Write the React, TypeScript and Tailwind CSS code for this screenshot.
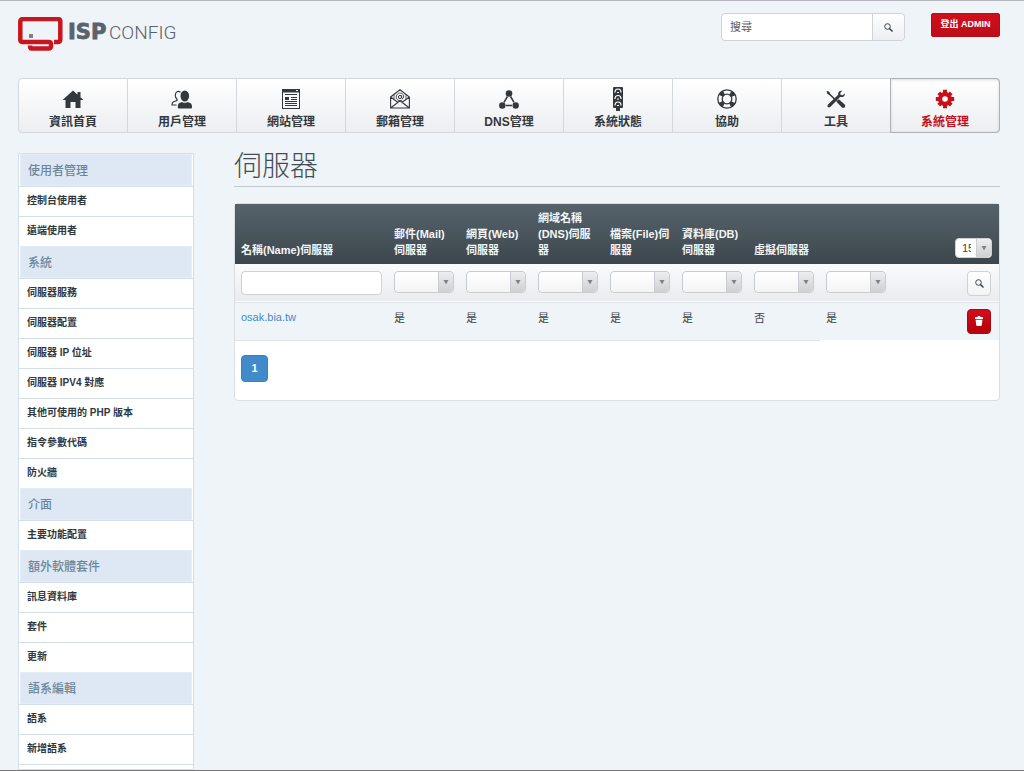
import type { ReactNode } from "react";

const navItems: { label: string; icon: ReactNode; active?: boolean }[] = [
  { label: "資訊首頁", icon: <HomeIcon /> },
  { label: "用戶管理", icon: <UsersIcon /> },
  { label: "網站管理", icon: <SitesIcon /> },
  { label: "郵箱管理", icon: <MailIcon /> },
  { label: "DNS管理", icon: <DnsIcon /> },
  { label: "系統狀態", icon: <MonitorIcon /> },
  { label: "協助", icon: <HelpIcon /> },
  { label: "工具", icon: <ToolsIcon /> },
  { label: "系統管理", icon: <GearIcon />, active: true },
];

const sections = [
  { title: "使用者管理", items: ["控制台使用者", "遠端使用者"] },
  {
    title: "系統",
    items: [
      "伺服器服務",
      "伺服器配置",
      "伺服器 IP 位址",
      "伺服器 IPV4 對應",
      "其他可使用的 PHP 版本",
      "指令參數代碼",
      "防火牆",
    ],
  },
  { title: "介面", items: ["主要功能配置"] },
  { title: "額外軟體套件", items: ["訊息資料庫", "套件", "更新"] },
  { title: "語系編輯", items: ["語系", "新增語系"] },
];

const columns = [
  { id: "mail", label: "郵件(Mail)伺服器" },
  { id: "web", label: "網頁(Web)伺服器" },
  { id: "dns", label: "網域名稱(DNS)伺服器" },
  { id: "file", label: "檔案(File)伺服器" },
  { id: "db", label: "資料庫(DB)伺服器" },
  { id: "vserver", label: "虛擬伺服器" },
  { id: "active", label: "" },
];

const servers = [
  { name: "osak.bia.tw", values: ["是", "是", "是", "是", "是", "否", "是"] },
];

export default function App() {
  return (
    <div className="flex h-screen flex-col overflow-hidden border-t border-b border-t-[#b4b8bc] border-b-[#77797b] bg-[#eff4f8] pr-6 pl-[18px] font-['Liberation_Sans','Noto_Sans_CJK_TC',sans-serif] text-[11px] text-[#3c464d]">
      <Header />
      <MainNav />
      <div className="mt-5 flex min-h-0 flex-1 gap-10">
        <Sidebar />
        <main className="min-w-0 flex-1">
          <h1 className="-mt-1 border-b border-[#c3c8cc] pb-px text-[28px] leading-9 font-light text-[#454d54]">
            伺服器
          </h1>
          <ServerList />
        </main>
      </div>
    </div>
  );
}

function Header() {
  return (
    <header className="flex shrink-0 items-start pt-3">
      <a href="#" aria-label="ISPConfig" className="mt-1">
        <Logo />
      </a>
      <form className="ml-auto flex h-7 w-[184px] rounded-sm border border-[#cdd3d8] bg-white">
        <input
          type="search"
          aria-label="搜尋"
          placeholder="搜尋"
          className="min-w-0 flex-1 px-2 outline-none placeholder:text-[#555c62]"
        />
        <button
          type="button"
          aria-label="搜尋"
          className="flex w-8 items-center justify-center rounded-r-sm border-l border-[#cdd3d8] bg-linear-to-b from-white to-[#eceef1]"
        >
          <SearchIcon />
        </button>
      </form>
      <button
        type="button"
        className="ml-[26px] h-6 w-[69px] rounded-xs border border-[#b50d17] bg-linear-to-b from-[#d00f1b] to-[#bd0d18] text-[9px] font-bold whitespace-nowrap text-white"
      >
        登出 ADMIN
      </button>
    </header>
  );
}

function MainNav() {
  return (
    <nav className="mt-[27px] flex h-[55px] shrink-0 rounded-sm border border-[#d3d8dc] bg-linear-to-b from-white to-[#eceef1]">
      {navItems.map((item) => (
        <a
          key={item.label}
          href="#"
          className={
            item.active
              ? "-m-px flex flex-1 flex-col items-center rounded-r-sm border border-[#adb2b7] pt-[10px] text-[12px] leading-4 font-bold text-[#c8101c] shadow-[inset_0_1px_3px_rgba(0,0,0,0.14)]"
              : "flex flex-1 flex-col items-center border-r border-[#d3d8dc] pt-[10px] text-[12px] leading-4 font-bold text-[#33383c]"
          }
        >
          <span className="mb-[5px] flex h-5 items-center">{item.icon}</span>
          {item.label}
        </a>
      ))}
    </nav>
  );
}

function Sidebar() {
  return (
    <aside className="w-[176px] shrink-0 border border-[#d3e0ea] bg-white">
      {sections.map((section) => (
        <section key={section.title}>
          <h2 className="mx-px h-8 border border-[#e4ecf6] bg-[#dee8f5] pl-[7px] text-[12px] leading-8 font-medium text-[#6c8799]">
            {section.title}
          </h2>
          <ul>
            {section.items.map((item) => (
              <li key={item} className="border-t border-[#d3e0ea]">
                <a href="#" className="block h-[29px] pl-2 text-[10px] leading-7 font-bold text-[#2f383f]">
                  {item}
                </a>
              </li>
            ))}
          </ul>
        </section>
      ))}
      <div className="border-t border-[#d3e0ea]" />
    </aside>
  );
}

function ServerList() {
  return (
    <div className="mt-4 rounded-sm border border-[#d9dee2] bg-white pb-[18px]">
      <table className="w-full table-fixed">
        <colgroup>
          <col className="w-[153px]" />
          {columns.map((column) => (
            <col key={column.id} className="w-[72px]" />
          ))}
          <col />
        </colgroup>
        <thead>
          <tr className="h-[60px] bg-linear-to-b from-[#56636b] to-[#3d464d] text-left align-bottom leading-4 text-[#f3f5f6]">
            <th className="px-[6px] pb-[6px] font-bold">名稱(Name)伺服器</th>
            {columns.map((column) => (
              <th key={column.id} className="px-[6px] pb-[6px] font-bold">
                {column.label}
              </th>
            ))}
            <th className="pr-[7px] pb-[6px]">
              <span className="relative ml-auto block h-5 w-[37px]">
                <select
                  aria-label="Rows per page"
                  className="block h-full w-full appearance-none overflow-hidden rounded-sm border border-[#cfd3d6] bg-white pr-5 pl-[6px] text-[11px] font-normal text-[#444]"
                >
                  <option>15</option>
                </select>
                <SelectArrow />
              </span>
            </th>
          </tr>
        </thead>
        <tbody>
          <tr className="h-[38px] border-b border-[#dfe3e8] bg-linear-to-b from-[#fbfbfc] to-[#e9ebef] align-top">
            <td className="px-[6px] pt-[7px]">
              <input
                type="text"
                aria-label="名稱(Name)伺服器"
                className="block h-6 w-full rounded-sm border border-[#cdd2d6] bg-white px-2"
              />
            </td>
            {columns.map((column) => (
              <td key={column.id} className="px-[6px] pt-[7px]">
                <span className="relative block h-[22px]">
                  <select
                    aria-label={column.label || "Active"}
                    className="block h-full w-full appearance-none rounded-sm border border-[#c9cdd1] bg-linear-to-b from-white to-[#f4f4f5] px-1"
                  >
                    <option></option>
                  </select>
                  <SelectArrow />
                </span>
              </td>
            ))}
            <td className="pt-[7px] pr-2">
              <button
                type="button"
                aria-label="Filter"
                className="ml-auto flex h-[25px] w-6 items-center justify-center rounded-sm border border-[#cdd2d6] bg-linear-to-b from-white to-[#f2f3f5]"
              >
                <SearchIcon />
              </button>
            </td>
          </tr>
          {servers.map((server) => (
            <tr key={server.name} className="h-[38px] bg-[#eff4f8] align-top leading-4">
              <td className="border-b border-[#e0e2e4] px-[6px] pt-[6px]">
                <a href="#" className="text-[#428bca]">
                  {server.name}
                </a>
              </td>
              {server.values.map((value, index) => (
                <td
                  key={columns[index].id}
                  className="border-b border-[#e0e2e4] px-[6px] pt-[7px] nth-[8]:border-b-0"
                >
                  {value}
                </td>
              ))}
              <td className="pt-[6px] pr-2">
                <button
                  type="button"
                  aria-label="Delete"
                  className="ml-auto flex h-[25px] w-6 items-center justify-center rounded-sm border border-[#a90a13] bg-linear-to-b from-[#d10f1b] to-[#b60009] text-white"
                >
                  <TrashIcon />
                </button>
              </td>
            </tr>
          ))}
        </tbody>
      </table>
      <div className="px-[6px] pt-[14px]">
        <button
          type="button"
          aria-current="page"
          className="h-[27px] w-[27px] rounded-sm border border-[#3a80bd] bg-[#428bca] font-bold text-white"
        >
          1
        </button>
      </div>
    </div>
  );
}

function SelectArrow() {
  return (
    <span className="pointer-events-none absolute inset-y-px right-px flex w-[15px] items-center justify-center rounded-r-sm border-l border-[#c9cdd1] bg-linear-to-b from-[#eeeeef] to-[#cfd0d2]">
      <svg width="6" height="6" viewBox="0 0 6 6" className="fill-[#808285]" aria-hidden="true">
        <path d="M.5 1h5L3 5.500z" />
      </svg>
    </span>
  );
}

function Logo() {
  return (
    <svg width="160" height="34" viewBox="0 0 160 34" aria-hidden="true">
      <path
        d="M36 25H39.500Q42.300 25 42.300 22.500V4.500Q42.300 2 39.500 2H5Q2.300 2 2.300 4.500V22.500Q2.300 25 5 25H30.500Q33 25 33 27V29Q33 31.500 30.500 31.500H13.500Q12 31.500 12 28.500"
        fill="none"
        stroke="#c8161f"
        strokeWidth="4.500"
      />
      <rect x="11" y="17" width="4" height="4" fill="#7b8388" />
      <text x="50" y="22" fontSize="21" fontWeight="700" fontFamily="DejaVu Sans" fill="#5a636b" stroke="#5a636b" strokeWidth="0.8">
        ISP
      </text>
      <text x="91" y="22" fontSize="19" fontWeight="300" fontFamily="Roboto" fill="#5a636b">
        CONFIG
      </text>
    </svg>
  );
}

function SearchIcon() {
  return (
    <svg width="9" height="9" viewBox="0 0 9 9" fill="none" stroke="#3c4247" aria-hidden="true">
      <circle cx="3.500" cy="3.500" r="2.800" />
      <path d="M5.700 5.700L8 8" strokeWidth="1.600" strokeLinecap="round" />
    </svg>
  );
}

function TrashIcon() {
  return (
    <svg width="8" height="10" viewBox="0 0 8 10" fill="currentColor" aria-hidden="true">
      <path d="M0 1.500Q0 1 .6 1H2.500L3 0H5L5.500 1H7.400Q8 1 8 1.500V3H0zM.6 3.700H7.400L6.800 9Q6.700 10 5.800 10H2.200Q1.300 10 1.200 9z" />
    </svg>
  );
}

function HomeIcon() {
  return (
    <svg width="22" height="19" viewBox="0 0 22 19" fill="currentColor" aria-hidden="true">
      <path d="M11 .5L21.500 10H18.500V18H13.500V12H8.500V18H3.500V10H.5zM15.500 2H18.500V7.500L15.500 4.800z" />
    </svg>
  );
}

function UsersIcon() {
  return (
    <svg width="22" height="19" viewBox="0 0 22 19" aria-hidden="true">
      <g fill="none" stroke="currentColor" strokeWidth="1.200">
        <path d="M9.500 2.200C7.500 .6 4.300 1.800 4.300 5.200C4.300 7 5 8.400 6 9.300V10.500L2.500 11.800Q1 12.500 1 15H5.500" />
      </g>
      <ellipse cx="13.800" cy="6" rx="4.300" ry="5.600" fill="currentColor" />
      <path d="M6.800 17.500Q6.600 13.600 8.500 12.900L11 11.900Q13.800 13.800 16.600 11.900L19.200 12.900Q21.100 13.600 21 17.500Q21 18.500 20 18.500H7.800Q6.800 18.500 6.800 17.500z" fill="currentColor" />
    </svg>
  );
}

function SitesIcon() {
  return (
    <svg width="18" height="20" viewBox="0 0 18 20" fill="none" stroke="currentColor" aria-hidden="true">
      <rect x="0.500" y="0.500" width="17" height="19" />
      <path d="M0 2H18" strokeWidth="3" />
      <path d="M14 1.500h2" stroke="white" />
      <path d="M3 5.500H15M9 8.500H15M9 10.500H15M3 12.500H15M3 14.500H15M3 16.500H15" />
      <path d="M3 9.500H7" strokeWidth="3" />
    </svg>
  );
}

function MailIcon() {
  return (
    <svg width="20" height="20" viewBox="0 0 20 20" fill="none" stroke="currentColor" aria-hidden="true">
      <path d="M.6 8L10 .8L19.400 8V19H.6zM.6 8L7.800 13.300M19.400 8L12.200 13.300M.6 19L10 11.800L19.400 19" strokeWidth="1.100" />
      <path d="M4 10.200V5.500M16 10.200V5.500" strokeWidth="0.800" />
      <circle cx="10" cy="8" r="1.600" />
      <path d="M11.700 6.200V8.600Q11.900 10 13 9.300Q14 8.400 13.600 6.600C12.700 3.500 8.500 3.300 6.900 5.700C5.300 8.500 7 11.600 10 11.600Q11.400 11.600 12.400 11" strokeWidth="0.900" />
    </svg>
  );
}

function DnsIcon() {
  return (
    <svg width="20" height="19" viewBox="0 0 20 19" fill="currentColor" aria-hidden="true">
      <circle cx="10" cy="3.500" r="3.300" />
      <circle cx="3.300" cy="15.500" r="3.200" />
      <circle cx="16.700" cy="15.500" r="3.200" />
      <path d="M8.400 6.500L5 12.300M11.600 6.500L15 12.300M7 15.500H13" stroke="currentColor" strokeWidth="1.500" />
    </svg>
  );
}

function MonitorIcon() {
  return (
    <svg width="10" height="24" viewBox="0 0 10 24" aria-hidden="true">
      <path d="M0 1Q0 0 1 0H9Q10 0 10 1V20Q10 21 9 21H7V24H3V21H1Q0 21 0 20z" fill="currentColor" />
      <g fill="none" stroke="white" strokeWidth="1.200">
        <path d="M2 5.500Q2 2 5 2T8 5.500M2 12Q2 8.500 5 8.500T8 12M2 18.500Q2 15 5 15T8 18.500" />
      </g>
      <path d="M4 5.500h2M4 12h2M4 18.500h2" stroke="white" strokeWidth="1.200" />
    </svg>
  );
}

function HelpIcon() {
  return (
    <svg width="20" height="20" viewBox="0 0 20 20" fill="none" stroke="currentColor" aria-hidden="true">
      <circle cx="10" cy="10" r="9.200" strokeWidth="1.300" />
      <circle cx="10" cy="10" r="4.800" strokeWidth="1.300" />
      {/* four straps, one on each diagonal of the ring */}
      <circle cx="10" cy="10" r="7" strokeWidth="4.400" strokeDasharray="4.400 6.596" strokeDashoffset="-3.300" />
    </svg>
  );
}

function ToolsIcon() {
  return (
    <svg width="20" height="18" viewBox="0 0 20 18" fill="currentColor" aria-hidden="true">
      <path d="M1 1L3.300 1.700L4.400 3.900L11 10.200L9.900 11.300L3.300 5L1.500 3.900L.5 1.500z" />
      <path d="M10.300 11.500L12.800 9.200L18.700 14.600Q19.700 16.300 18.500 17.400Q17.200 18.300 15.900 17.500z" />
      <path d="M18.900 3.400L16.500 5.200L14.700 4.900L14.200 3L16.200 .8C13.500 .2 11.600 2.300 12.200 4.800L2 14.500Q.8 16 1.900 17.100Q3.100 18 4.500 16.700L14.100 6.900C16.900 7.500 19.200 6 18.900 3.400z" />
    </svg>
  );
}

function GearIcon() {
  return (
    <svg width="20" height="20" viewBox="0 0 20 20" aria-hidden="true">
      <path
        d="M10 .8V19.200M.8 10H19.200M3.800 3.800L16.200 16.200M16.200 3.800L3.800 16.200"
        stroke="currentColor"
        strokeWidth="4"
      />
      <circle cx="10" cy="10" r="7" fill="currentColor" />
      <circle cx="10" cy="10" r="2.800" fill="white" />
    </svg>
  );
}
